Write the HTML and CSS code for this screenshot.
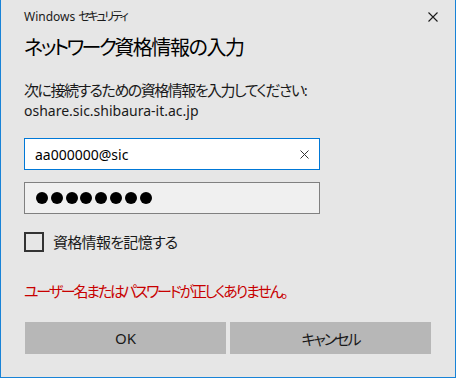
FILE: index.html
```html
<!DOCTYPE html>
<html lang="ja">
<head>
<meta charset="utf-8">
<title>Windows セキュリティ</title>
<link rel="stylesheet" href="styles.css">
</head>
<body>
<div class="window">
  <div class="titlebar">
    <span class="app">Windows <span class="kana">セキュリティ</span></span>
    <svg class="close" width="10" height="10" viewBox="0 0 10 10"><path d="M0.5 0.5L9.5 9.5M9.5 0.5L0.5 9.5" stroke="#1a1a1a" stroke-width="1.1" fill="none"/></svg>
  </div>
  <h1 class="heading"><span class="hk">ネットワーク</span>資格情報の入力</h1>
  <p class="desc"><span class="jp">次に接続するための資格情報を入力してください</span>:<br><span class="host">oshare.sic.shibaura-it.ac.jp</span></p>
  <div class="field focused">
    <span class="value">aa000000@sic</span>
    <svg class="clear" width="9" height="9" viewBox="0 0 9 9"><path d="M0.5 0.5L8.5 8.5M8.5 0.5L0.5 8.5" stroke="#333" stroke-width="1" fill="none"/></svg>
  </div>
  <div class="field password">
    <span class="dots"><i></i><i></i><i></i><i></i><i></i><i></i><i></i><i></i></span>
  </div>
  <label class="remember">
    <span class="box"></span>
    <span class="label">資格情報を記憶する</span>
  </label>
  <p class="error">ユーザー名またはパスワードが正しくありません。</p>
  <div class="buttons">
    <button class="btn">OK</button>
    <button class="btn cancel">キャンセル</button>
  </div>
</div>
</body>
</html>
```

FILE: styles.css
```css
html, body {
  margin: 0;
  padding: 0;
  background: #e6e6e6;
}
body {
  font-family: "Noto Sans", "Noto Sans CJK JP", sans-serif;
  font-feature-settings: "palt";
  color: #1a1a1a;
}
.window {
  width: 456px;
  height: 378px;
  box-sizing: border-box;
  background: #e6e6e6;
  border: 1px solid #1883d7;
  border-top: none;
  padding: 0 24px 0 23px;
  display: flex;
  flex-direction: column;
}
.titlebar {
  height: 33px;
  display: flex;
  align-items: center;
  justify-content: space-between;
  margin-right: -7px;
}
.app {
  font-size: 12px;
  line-height: 16px;
  color: #1a1a1a;
}
.kana {
  letter-spacing: -2.3px;
}
.close {
  display: block;
}
.heading {
  margin: 1px 0 0;
  font-size: 20px;
  font-weight: normal;
  line-height: 28px;
  letter-spacing: -1.4px;
  color: #000;
}
.hk { letter-spacing: -2.6px; }
.desc {
  margin: 18px 0 0;
  font-size: 15px;
  line-height: 20px;
  color: #1a1a1a;
}
.jp {
  letter-spacing: -1.5px;
}
.host {
  font-size: 14px;
}
.field {
  width: 296px;
  height: 32px;
  box-sizing: border-box;
  margin-top: 17px;
  display: flex;
  align-items: center;
  justify-content: space-between;
  padding: 0 10px 0 10px;
  border: 1px solid #808080;
  background: #f0f0f0;
}
.field.focused {
  border-color: #0078d7;
  background: #fff;
}
.value {
  font-size: 14px;
  color: #000;
}
.clear { display: block; }
.password {
  margin-top: 12px;
}
.dots {
  display: flex;
  gap: 2.8px;
  padding-left: 1px;
}
.dots i {
  display: block;
  width: 12px;
  height: 12px;
  border-radius: 50%;
  background: #000;
}
.remember {
  margin-top: 18px;
  display: flex;
  align-items: center;
  gap: 9px;
  height: 20px;
}
.box {
  width: 20px;
  height: 20px;
  box-sizing: border-box;
  border: 2px solid #333;
}
.label {
  font-size: 15px;
  line-height: 20px;
  letter-spacing: -0.7px;
  color: #1a1a1a;
}
.error {
  margin: 29px 0 0;
  font-size: 15px;
  line-height: 20px;
  letter-spacing: -2.2px;
  color: #c80000;
}
.buttons {
  margin-top: 21px;
  display: flex;
  gap: 4px;
  margin-left: 1px;
}
.btn {
  width: 201px;
  height: 32px;
  border: none;
  background: #b7b7b7;
  font-family: "Noto Sans", "Noto Sans CJK JP", sans-serif;
  font-feature-settings: "palt";
  font-size: 15px;
  color: #1a1a1a;
  padding: 0;
}
.cancel {
  letter-spacing: -2px;
}
```
